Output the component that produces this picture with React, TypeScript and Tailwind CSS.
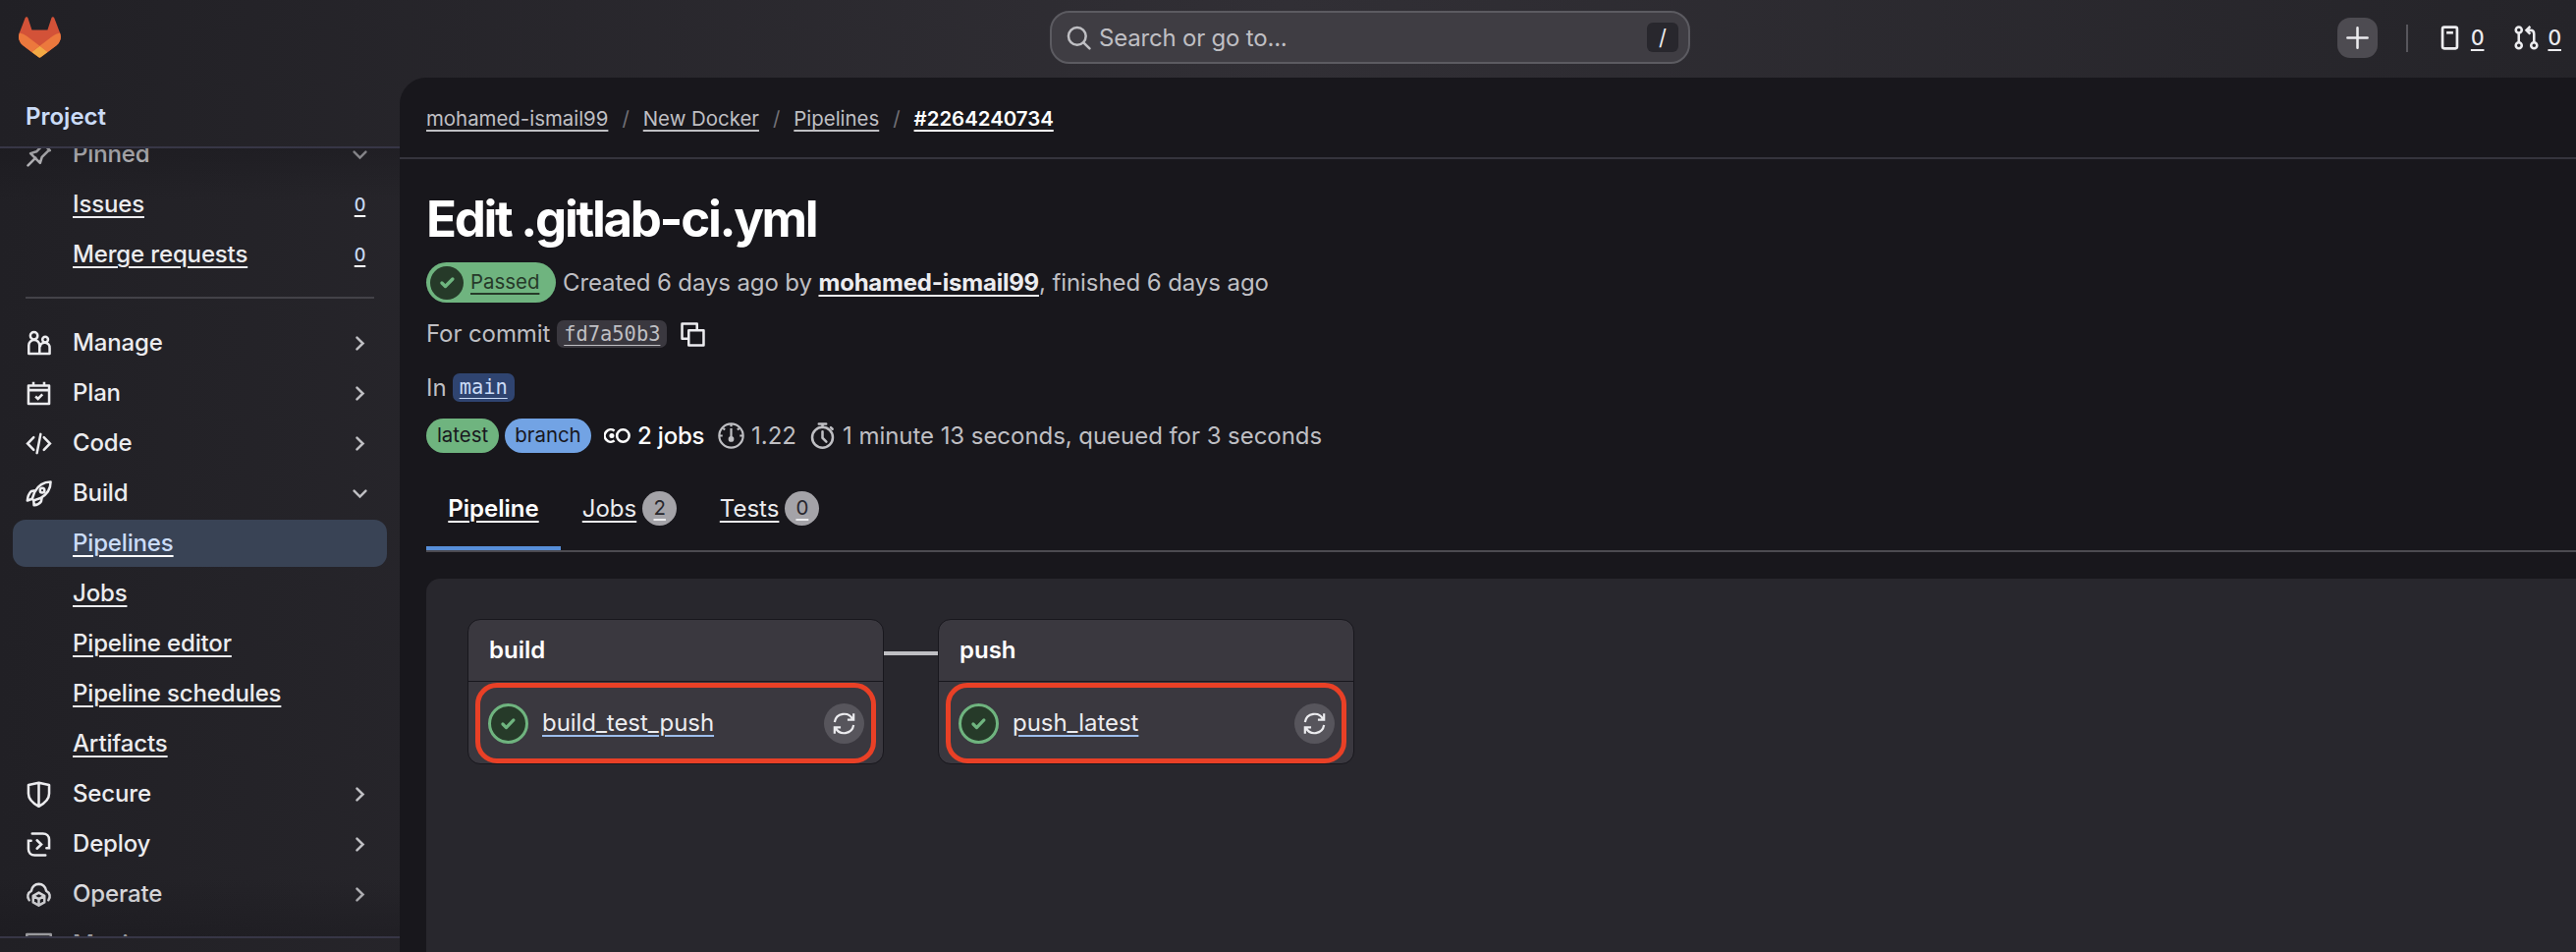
import type { ReactNode } from 'react'
import clsx from 'clsx'

type IconProps = { className?: string; children?: ReactNode; size?: number; strokeWidth?: number }

function Icon({ className, children, size = 27, strokeWidth = 1.5 }: IconProps) {
  return (
    <svg
      width={size}
      height={size}
      viewBox="0 0 16 16"
      fill="none"
      stroke="currentColor"
      strokeWidth={strokeWidth}
      className={clsx('shrink-0', className)}
    >
      {children}
    </svg>
  )
}

const icons = {
  pin: (
    <path d="M1.5 14.5l4.6-4.6M3 7.2l5.8 5.8 1.1-3.6 3.6-3.6 1.2-.4L10.6 1.3l-.4 1.2-3.6 3.6L3 7.2z" strokeLinejoin="round" strokeLinecap="round" />
  ),
  manage: (
    <g strokeLinejoin="round">
      <circle cx="5.1" cy="3.4" r="2.2" />
      <circle cx="11.9" cy="5.7" r="1.7" />
      <path d="M1.95 14.25V9.2a3.25 3.25 0 0 1 6.5 0v5.05zM8.45 14.25h6.1v-3.5a2.9 2.9 0 0 0-5.8-.6" />
    </g>
  ),
  plan: (
    <g>
      <path d="M1.75 3.25h12.5v11H1.75zM1.75 6h12.5M4.75 1v2.25M11.25 1v2.25" strokeLinejoin="round" />
      <path d="M6 9.8l1.5 1.4 2.7-2.7" />
    </g>
  ),
  code: <path d="M4.9 4.25L1.25 8l3.65 3.75M11.1 4.25L14.75 8l-3.65 3.75M9.1 2.3L6.9 13.7" strokeLinecap="round" />,
  build: (
    <g strokeLinejoin="round">
      <path d="M15.15.95c-4.3 0-7.4 1.9-9.7 6.1L4 11.1l1 1 4-1.4c4.2-2.3 6.15-5.5 6.15-9.75z" />
      <circle cx="10.1" cy="6" r="1.35" />
      <path d="M5.8 6.1L3.5 6.5C2 8 1.3 9.5 1.1 12.2l2.9-1.1M9.9 10.2l-.5 2.5c-1 1.4-2.2 2.1-4.3 2.3l-.2-2.9" />
    </g>
  ),
  secure: <path d="M8 1.1L1.75 2.4v5.2c0 3 2.2 5.6 6.25 7.7 4.05-2.1 6.25-4.7 6.25-7.7V2.4zM8 1.1v14.2" strokeLinejoin="round" />,
  deploy: (
    <g strokeLinecap="round">
      <path d="M4 1.5h6.5c2.2 0 3.75 1.5 3.75 3.7v5h-1.6M12 14.5H5.5c-2.2 0-3.75-1.5-3.75-3.7v-5h1.6" />
      <path d="M6.9 5.5L9.5 8l-2.6 2.5" />
    </g>
  ),
  operate: (
    <g strokeLinejoin="round">
      <path d="M2.2 11.4A3.6 3.6 0 0 1 3.5 5.8C3.9 3.3 5.7 1.7 8 1.7s4.1 1.6 4.5 4.1a3.6 3.6 0 0 1 1.3 5.6" strokeLinecap="round" />
      <path d="M8 6.9l3.4 1.9v3.9L8 14.6l-3.4-1.9V8.8zM4.8 9l3.2 1.7L11.2 9M8 10.7v3.8" />
    </g>
  ),
  monitor: <path d="M.75 1.75h14.5v10H.75zM5 14.5h6M3.5 8h2L8 4.6l1.5 5.4 1.5-2h2" strokeLinejoin="round" />,
  chevronRight: <path d="M6.2 4.5L9.8 8l-3.6 3.5" strokeLinecap="round" />,
  chevronDown: <path d="M4.5 6.3L8 9.8l3.5-3.5" strokeLinecap="round" />,
  search: (
    <g strokeLinecap="round">
      <circle cx="7" cy="7" r="5.25" />
      <path d="M11 11l3.5 3.5" />
    </g>
  ),
  plus: <path d="M8 2v12M2 8h12" strokeLinecap="round" />,
  issue: (
    <g>
      <rect x="3.6" y="1.6" width="8.8" height="12.8" rx="1" />
      <path d="M6 4.9h4" />
    </g>
  ),
  merge: (
    <g>
      <circle cx="3.4" cy="3.3" r="1.8" />
      <circle cx="3.4" cy="12.6" r="1.8" />
      <circle cx="12.6" cy="12.6" r="1.8" />
      <path d="M3.4 5.1v5.7M12.6 10.8V5.6q0-2.2-2.2-2.2H8.2M10.3 1.1L8 3.4l2.3 2.3" />
    </g>
  ),
  check: <path d="M4.7 8.3l2.1 2.1 4.4-4.5" strokeLinecap="round" strokeLinejoin="round" />,
  copy: <path d="M5.5 10.5H1.5v-9h9v4M5.5 5.5h9v9h-9z" strokeLinejoin="round" />,
  pipeline: (
    <g>
      <path d="M6.3 5A3.7 3.7 0 1 0 6.3 11" />
      <circle cx="4.7" cy="8" r="1.5" fill="currentColor" stroke="none" />
      <circle cx="11.5" cy="8" r="3.7" />
    </g>
  ),
  meter: (
    <g>
      <circle cx="8" cy="8" r="7.2" />
      <path d="M8 3.5v6M8 1v1.5M1 8h1.8M13.2 8H15M3.2 3.5l1 1M12.8 3.5l-1 1" />
      <circle cx="8" cy="10" r="1.7" fill="currentColor" stroke="none" />
    </g>
  ),
  timer: (
    <g>
      <circle cx="8" cy="9" r="6.2" />
      <path d="M8 5.5V9.3l2.3 2.3M5.8.9h4.4M8 1v2M13 3l1 1" strokeLinecap="round" />
    </g>
  ),
  retry: (
    <path d="M1.8 7A6.3 6.3 0 0 1 13.6 5.2M14.2 1.5v4h-4M14.2 9A6.3 6.3 0 0 1 2.4 10.8M1.8 14.5v-4h4" />
  ),
}

type NavEntry = {
  label: string
  icon?: keyof typeof icons
  count?: number
  open?: boolean
  active?: boolean
}

const PINNED: NavEntry[] = [
  { label: 'Pinned', icon: 'pin', open: true },
  { label: 'Issues', count: 0 },
  { label: 'Merge requests', count: 0 },
]

const NAV: NavEntry[] = [
  { label: 'Manage', icon: 'manage' },
  { label: 'Plan', icon: 'plan' },
  { label: 'Code', icon: 'code' },
  { label: 'Build', icon: 'build', open: true },
  { label: 'Pipelines', active: true },
  { label: 'Jobs' },
  { label: 'Pipeline editor' },
  { label: 'Pipeline schedules' },
  { label: 'Artifacts' },
  { label: 'Secure', icon: 'secure' },
  { label: 'Deploy', icon: 'deploy' },
  { label: 'Operate', icon: 'operate' },
  { label: 'Monitor', icon: 'monitor' },
]

const STAGES = [
  { name: 'build', job: 'build_test_push' },
  { name: 'push', job: 'push_latest' },
]

const UNDERLINE = 'underline decoration-2 underline-offset-[4px]'

function NavRow({ item }: { item: NavEntry }) {
  return (
    <li
      className={clsx(
        'flex h-12 items-center rounded-[13px] pl-[13px] pr-[14px]',
        item.active ? 'bg-[#394355] text-[#cbdcf7]' : 'text-[#ececef]',
      )}
    >
      <span className="flex w-12 shrink-0">{item.icon && <Icon>{icons[item.icon]}</Icon>}</span>
      <span className={clsx('grow', !item.icon && UNDERLINE, item.active && 'decoration-white')}>
        {item.label}
      </span>
      {item.icon && (
        <Icon className="text-[#bfbfc3]">{item.open ? icons.chevronDown : icons.chevronRight}</Icon>
      )}
      {item.count !== undefined && (
        <span className="w-[27px] text-center text-[18px] text-[#cbdcf7] underline decoration-white decoration-2 underline-offset-[4px]">
          {item.count}
        </span>
      )}
    </li>
  )
}

function Logo() {
  return (
    <svg width="43" height="42" viewBox="0 0 25 24" fill="none">
      <path d="m24.507 9.5-.034-.09L21.082.562a.896.896 0 0 0-1.694.091l-2.29 7.01H7.825L5.535.653a.898.898 0 0 0-1.694-.09L.451 9.411.416 9.5a6.297 6.297 0 0 0 2.09 7.278l.012.01.03.022 5.16 3.867 2.56 1.935 1.554 1.176a1.051 1.051 0 0 0 1.268 0l1.555-1.176 2.56-1.935 5.197-3.89.014-.01A6.297 6.297 0 0 0 24.507 9.5Z" fill="#d35238" />
      <path d="m24.507 9.5-.034-.09a11.44 11.44 0 0 0-4.56 2.051l-7.447 5.632 4.742 3.584 5.197-3.89.014-.01A6.297 6.297 0 0 0 24.507 9.5Z" fill="#ec783d" />
      <path d="m7.707 20.677 2.56 1.935 1.555 1.176a1.051 1.051 0 0 0 1.268 0l1.555-1.176 2.56-1.935-4.743-3.584-4.755 3.584Z" fill="#f2a944" />
      <path d="M5.01 11.461a11.43 11.43 0 0 0-4.56-2.05L.416 9.5a6.297 6.297 0 0 0 2.09 7.278l.012.01.03.022 5.16 3.867 4.745-3.584-7.444-5.632Z" fill="#ec783d" />
    </svg>
  )
}

function TopBar() {
  return (
    <header className="flex h-[79px] shrink-0 items-center justify-between pl-[19px] pr-[15px]">
      <div className="w-[1050px] pb-[3px]">
        <Logo />
      </div>
      <div className="-mt-[3px] flex h-[54px] w-[652px] items-center rounded-[20px] border-2 border-[#5c5b61] bg-[#3f3d43] pl-[14px] pr-[10px] text-[#bfbfc3]">
        <Icon>{icons.search}</Icon>
        <span className="ml-[7px] grow pt-px text-[24px] tracking-[-0.2px]">Search or go to...</span>
        <kbd className="flex h-[30px] w-8 items-center justify-center rounded-[6px] bg-[#28272d] font-['Inter',sans-serif] text-[22px] text-[#ececef]">
          /
        </kbd>
      </div>
      <div className="-mt-[2px] flex w-[887px] items-center justify-end text-[21px] font-medium text-[#ececef]">
        <span className="flex size-[41px] items-center justify-center rounded-[13px] bg-[#4d4b51]">
          <Icon>{icons.plus}</Icon>
        </span>
        <span className="ml-[29px] h-[28px] w-[2px] bg-[#57565c]" />
        <span className="ml-[29px] flex items-center">
          <Icon strokeWidth={1.6}>{icons.issue}</Icon>
          <span className={clsx('ml-[8px]', UNDERLINE)}>0</span>
        </span>
        <span className="ml-[30px] flex items-center">
          <Icon>{icons.merge}</Icon>
          <span className={clsx('ml-[8px]', UNDERLINE)}>0</span>
        </span>
      </div>
    </header>
  )
}

function Sidebar() {
  return (
    <aside className="flex w-[407px] shrink-0 flex-col text-[24px] font-medium tracking-[-0.15px]">
      <div className="flex h-[72px] shrink-0 items-center border-b-2 border-[#373646] pl-[26px] pt-[9px] text-[24px] font-semibold tracking-normal text-[#cbdcf7]">
        Project
      </div>
      <nav className="relative min-h-0 grow overflow-hidden">
        <ul className="-mt-[18px] flex flex-col gap-[3px] px-[13px]">
          {PINNED.map((item) => (
            <NavRow key={item.label} item={item} />
          ))}
        </ul>
        <hr className="mx-[26px] mt-[19px] mb-[21px] h-0 border-t-2 border-[#434248]" />
        <ul className="flex flex-col gap-[3px] px-[13px]">
          {NAV.map((item) => (
            <NavRow key={item.label} item={item} />
          ))}
        </ul>
        {/* scroll scrims */}
        <div className="absolute inset-x-0 top-0 h-[54px] bg-linear-to-b from-[#18171c]/40 to-transparent" />
        <div className="absolute inset-x-0 bottom-0 h-[60px] bg-linear-to-t from-[#18171c]/40 to-transparent" />
      </nav>
      <div className="h-4 shrink-0 border-t-2 border-[#373646]" />
    </aside>
  )
}

function Breadcrumbs() {
  return (
    <div className="flex h-[83px] shrink-0 items-center gap-[14px] border-b-2 border-[#35343d] pl-[27px] pt-[4px] text-[20.4px] text-[#bfbfc3]">
      <span className={UNDERLINE}>mohamed-ismail99</span>
      <span className="text-[#737278]">/</span>
      <span className={UNDERLINE}>New Docker</span>
      <span className="text-[#737278]">/</span>
      <span className={UNDERLINE}>Pipelines</span>
      <span className="text-[#737278]">/</span>
      <span className={clsx('font-semibold text-white', UNDERLINE)}>#2264240734</span>
    </div>
  )
}

function PipelineHeader() {
  return (
    <div className="text-[24px] text-[#bfbfc3]">
      <h1 className="mt-[31px] h-[60px] text-[51px] leading-[60px] font-bold tracking-[-0.045em] text-white">
        Edit .gitlab-ci.yml
      </h1>
      <div className="mt-[14px] flex h-[41px] items-center whitespace-pre tracking-[-0.12px]">
        <span className="mr-[7px] flex h-[41px] w-[132px] items-center rounded-full bg-[#6fb47f] pl-1 text-[20.4px] tracking-normal text-[#263a29]">
          <span className="mr-[7px] flex size-[34px] items-center justify-center rounded-full bg-[#263a29] text-[#6fb47f]">
            <Icon strokeWidth={2}>{icons.check}</Icon>
          </span>
          <span className={UNDERLINE}>Passed</span>
        </span>
        <span>Created 6 days ago by </span>
        <span className={clsx('font-bold tracking-[-0.22px] text-[#ececef]', UNDERLINE)}>mohamed-ismail99</span>
        <span className="tracking-[-0.08px]">, finished 6 days ago</span>
      </div>
      <div className="mt-[18px] flex h-[28px] items-center">
        <span className="tracking-[-0.1px]">For commit</span>
        <span className="ml-[7px] flex h-[28px] items-center rounded-[7px] bg-[#3a383f] px-[7px] font-['DejaVu_Sans_Mono',monospace] text-[20.4px] underline decoration-1 underline-offset-[4px]">
          fd7a50b3
        </span>
        <Icon className="ml-[13px] text-[#ececef]">{icons.copy}</Icon>
      </div>
      <div className="mt-[26px] flex h-[29px] items-center">
        <span>In</span>
        <span className="ml-[6px] flex h-[29px] items-center rounded-[7px] bg-[#2f4470] px-[7px] font-['DejaVu_Sans_Mono',monospace] text-[20.4px] text-[#cbdcf7] underline decoration-1 underline-offset-[4px]">
          main
        </span>
      </div>
      <div className="mt-[17px] flex h-[35px] items-center whitespace-nowrap">
        <span className="flex h-[35px] w-[74px] items-center justify-center rounded-full bg-[#6fb47f] text-[20.4px] text-[#18171d]">
          latest
        </span>
        <span className="ml-[6px] flex h-[35px] w-[88px] items-center justify-center rounded-full bg-[#72a3e4] text-[20.4px] text-[#18171d]">
          branch
        </span>
        <span className="ml-[13px] flex w-[103px] items-center gap-[7px] tracking-[-0.2px] text-white">
          <Icon>{icons.pipeline}</Icon>
          <span className="font-medium">2 jobs</span>
        </span>
        <span className="ml-[13px] flex w-[81px] items-center gap-[7px]">
          <Icon strokeWidth={1.3}>{icons.meter}</Icon>1.22
        </span>
        <span className="ml-[12px] flex items-center gap-[7px] tracking-[-0.05px]">
          <Icon>{icons.timer}</Icon>1 minute 13 seconds, queued for 3 seconds
        </span>
      </div>
    </div>
  )
}

function Tab({ label, count }: { label: string; count?: number }) {
  const active = count === undefined
  return (
    <div
      className={clsx(
        'flex items-center text-[24px] text-[#ececef]',
        active ? 'border-b-4 border-[#578fd9] px-[22.3px] pt-1 font-semibold text-white' : 'px-[21.8px]',
      )}
    >
      <span className={UNDERLINE}>{label}</span>
      {!active && (
        <span className="ml-[6px] flex size-[35px] items-center justify-center rounded-full bg-[#a4a3a8] text-[20.4px] text-[#28272d] underline decoration-[#ececef] decoration-2 underline-offset-[4px]">
          {count}
        </span>
      )}
    </div>
  )
}

function StageCard({ name, job }: { name: string; job: string }) {
  return (
    <div className="flex h-[148px] w-[424px] flex-col rounded-[13px] border border-[#18171d] bg-[#3a383f]">
      <div className="flex h-[63px] items-center border-b border-[#18171d] pl-[21px] text-[24px] font-semibold text-white">
        {name}
      </div>
      <div className="mx-[7px] mt-px flex h-[82px] items-center rounded-[22px] border-[5px] border-[#e94026] pl-[8px] pr-[7px]">
        <span className="flex size-[41px] items-center justify-center rounded-full border-[3.5px] border-[#6fb47f] bg-[#263a29] text-[#6fb47f]">
          <Icon strokeWidth={1.9}>{icons.check}</Icon>
        </span>
        <span className="ml-[14px] grow text-[24px] tracking-[-0.05px] text-[#ececef] underline decoration-[#9dbdec] decoration-2 underline-offset-[4px]">
          {job}
        </span>
        <span className="flex size-[41px] items-center justify-center rounded-full bg-[#57555c] text-[#ececef]">
          <Icon size={25} strokeWidth={1.4}>{icons.retry}</Icon>
        </span>
      </div>
    </div>
  )
}

export default function App() {
  return (
    <div className="flex h-[969px] w-[2623px] flex-col overflow-hidden bg-linear-to-r from-[#212025] via-[#312f35] to-[#252429] font-['Inter',sans-serif]">
      <TopBar />
      <div className="flex min-h-0 grow">
        <Sidebar />
        <main className="flex min-w-0 grow flex-col overflow-hidden rounded-tl-[27px] bg-[#18171c]">
          <Breadcrumbs />
          <div className="flex min-h-0 grow flex-col pl-[27px]">
            <PipelineHeader />
            <div className="mt-[14px] flex h-[87px] shrink-0 border-b-2 border-[#4c4b51]">
              <Tab label="Pipeline" />
              <Tab label="Jobs" count={2} />
              <Tab label="Tests" count={0} />
            </div>
            <div className="mt-[27px] flex grow items-start rounded-tl-[14px] bg-[#28272d] pl-[42px] pt-[41px]">
              {STAGES.map((stage, i) => (
                <div key={stage.name} className="flex">
                  {i > 0 && <span className="mt-[33px] h-[4px] w-[55px] bg-[#bfbfc3]" />}
                  <StageCard name={stage.name} job={stage.job} />
                </div>
              ))}
            </div>
          </div>
        </main>
      </div>
    </div>
  )
}
